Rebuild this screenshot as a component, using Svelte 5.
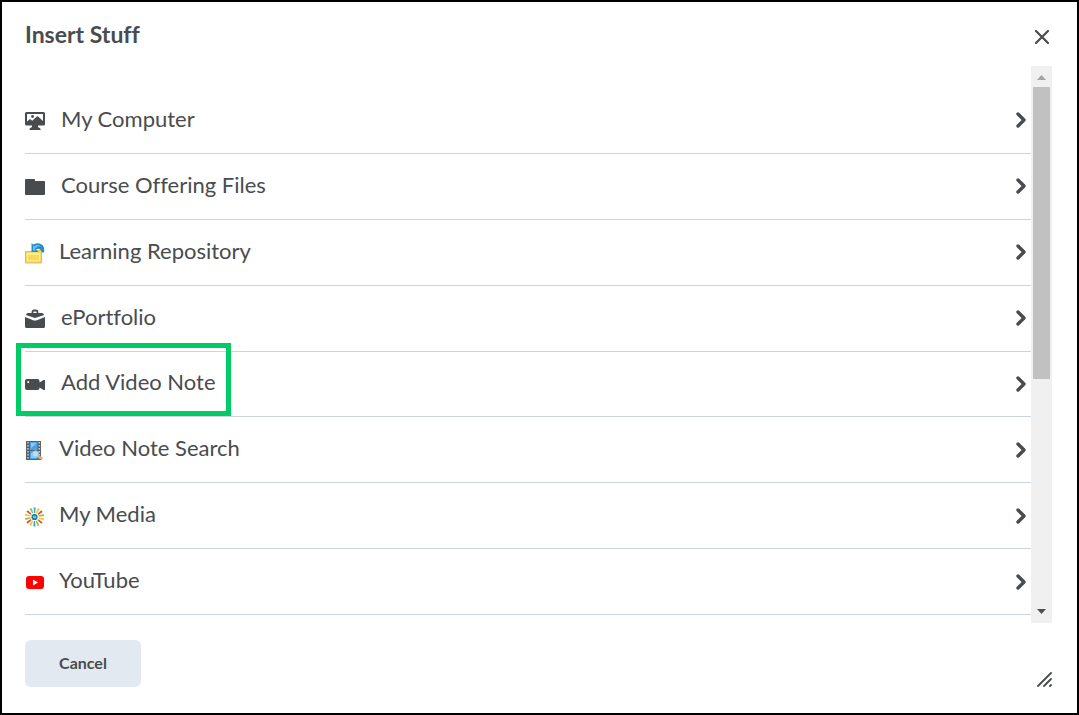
<script>
  const items = [
    { name: 'My Computer', icon: 'computer' },
    { name: 'Course Offering Files', icon: 'folder' },
    { name: 'Learning Repository', icon: 'repository', small: true },
    { name: 'ePortfolio', icon: 'portfolio' },
    { name: 'Add Video Note', icon: 'video', marked: true },
    { name: 'Video Note Search', icon: 'film', small: true },
    { name: 'My Media', icon: 'media', small: true },
    { name: 'YouTube', icon: 'youtube', small: true }
  ];
  const rayColors = ['#3aa6dd', '#f9c623', '#e8473f', '#8cc63f', '#f9c623', '#e8473f', '#8cc63f'];
  const rays = Array.from({ length: 14 }, (_, i) => ({ angle: (i * 360) / 14, color: rayColors[i % 7] }));
</script>

<div class="dialog" role="dialog" aria-labelledby="dialog-title">
  <header>
    <h1 id="dialog-title">Insert Stuff</h1>
    <button class="close" type="button" aria-label="Close">
      <svg width="14" height="14" viewBox="0 0 14 14"><path d="M1 1 L13 13 M13 1 L1 13" fill="none" stroke="#494c4e" stroke-width="2.200" stroke-linecap="round" /></svg>
    </button>
  </header>

  <div class="body">
    <ul>
      {#each items as item}
        <li class:marked={item.marked}>
          <button class="row" type="button">
            <span class="icon" class:small={item.small}>
              {#if item.icon === 'computer'}
                <svg width="20" height="20" viewBox="0 0 20 20">
                  <path fill="#494c4e" fill-rule="evenodd" d="M1.500 1h17A1.500 1.500 0 0 1 20 2.500v10.500a1.500 1.500 0 0 1-1.500 1.500H13v1.500l2 1.200q.8.500.5 1.800H4.500q-.3-1.300.5-1.800L7 16v-1.500H1.500A1.500 1.500 0 0 1 0 13v-10.500A1.500 1.500 0 0 1 1.500 1zM2 3v7.500l3-2.500 2.200 1.800L12.500 5 18 10V3z" />
                  <circle cx="7.500" cy="5.500" r="1.400" fill="#494c4e" />
                </svg>
              {:else if item.icon === 'folder'}
                <svg width="20" height="20" viewBox="0 0 20 20"><path fill="#494c4e" d="M1 2h8q1 0 1 1v1h9q1 0 1 1v12q0 1-1 1H1q-1 0-1-1V3q0-1 1-1z" /></svg>
              {:else if item.icon === 'repository'}
                <svg width="20" height="22" viewBox="0 0 20 22">
                  <path fill="#f7dc62" stroke="#e3bd45" d="M.5 9.500h6l1-1h9v12.500H.5z" />
                  <path fill="#ffeb98" d="M2 11h13v8H2z" />
                  <path fill="#fcd955" d="M3 13h11v5H3z" />
                  <path fill="#258bc9" d="M6.500 1v9h7L11 7.500Q15 5 17 10.500h2Q20.500 2 13 1.200 9.500 1 8.500 2.800z" />
                  <path fill="#6bc1ed" d="M8 4v4.500h3L9.800 7Q13 3 16.500 5 13 1.500 9 4.500z" />
                </svg>
              {:else if item.icon === 'portfolio'}
                <svg width="20" height="20" viewBox="0 0 20 20">
                  <path fill="none" stroke="#494c4e" stroke-width="1.800" d="M7.500 5V3q0-1.500 1.500-1.500h2q1.500 0 1.500 1.500v2" />
                  <path fill="#494c4e" d="M3 4h14q1 0 1.400 1l.8 1L10 9 .8 6 1.600 5Q2 4 3 4zM0 8l7.500 3q2.500 1 5 0L20 8v9.500q0 1.500-1.500 1.500h-17Q0 19 0 17.500z" />
                </svg>
              {:else if item.icon === 'video'}
                <svg width="20" height="20" viewBox="0 0 20 20">
                  <path fill="#494c4e" fill-rule="evenodd" d="M2 4h10.500q2 0 2 2v1.500L18.500 5H20v10h-1.500l-4-2.500V13q0 2-2 2H2q-2 0-2-2V6q0-2 2-2zM2.300 6.200v1.800h1.800V6.200z" />
                </svg>
              {:else if item.icon === 'film'}
                <svg width="18" height="20" viewBox="0 0 18 20">
                  <path fill="#5d6066" d="M1 0h15v19H1z" />
                  <path fill="#4aa3e8" d="M5 1h7.500v8H5zM5 10h7.500v8H5z" />
                  <path fill="#8acbf4" d="M6 2h6L6 7zM6 12h6v5H6z" />
                  <path stroke="#c9cccf" stroke-width="1.500" stroke-dasharray="1.500 1.500" d="M3 1v18M14.300 1v18" />
                  <path stroke="#d9b370" stroke-width="2.500" stroke-linecap="round" d="M13.500 15.500l3 2" />
                  <circle cx="10.500" cy="13" r="3.200" fill="#b5e0fb" stroke="#8bc3e8" />
                </svg>
              {:else if item.icon === 'media'}
                <svg width="20" height="20" viewBox="0 0 20 20">
                  {#each rays as ray}
                    <path d="M8.500 .5h2.200l-.5 5.500h-1.200z" fill={ray.color} transform="rotate({ray.angle} 9.500 10)" />
                  {/each}
                  <circle cx="9.500" cy="10" r="3.800" fill="#fff" />
                  <circle cx="9.500" cy="10" r="2.200" fill="#fff" stroke="#167b9d" stroke-width="1.800" />
                  <circle cx="9.500" cy="10" r=".8" fill="#1b86aa" />
                </svg>
              {:else}
                <svg width="20" height="20" viewBox="0 0 20 20">
                  <rect x="1" y="3" width="18" height="13" rx="3" fill="#f00" />
                  <path fill="#fff" d="M8 6.500v6l5-3z" />
                </svg>
              {/if}
            </span>
            <span class="name">{item.name}</span>
            <svg class="chevron" width="10" height="16" viewBox="0 0 10 16"><path d="M2 2 L8 8 L2 14" fill="none" stroke="#494c4e" stroke-width="3.400" stroke-linecap="round" stroke-linejoin="round" /></svg>
          </button>
        </li>
      {/each}
    </ul>
    <div class="scrollbar" aria-hidden="true">
      <span class="arrow"><svg width="9" height="5" viewBox="0 0 9 5"><path fill="#a3a3a3" d="M4.500 0L9 5H0z" /></svg></span>
      <span class="track"><span class="thumb"></span></span>
      <span class="arrow lower"><svg width="9" height="5" viewBox="0 0 9 5"><path fill="#505050" d="M0 0h9L4.500 5z" /></svg></span>
    </div>
  </div>

  <footer>
    <button class="cancel" type="button">Cancel</button>
    <svg class="grip" width="16" height="16" viewBox="0 0 16 16"><path d="M2 15L15 2M8 15l7-7M14 15l1-1" fill="none" stroke="#494c4e" stroke-width="1.800" stroke-linecap="round" /></svg>
  </footer>
</div>

<style>
  :global(body) {
    margin: 0;
    background: #fff;
  }
  .dialog {
    box-sizing: border-box;
    min-height: 100vh;
    display: flex;
    flex-direction: column;
    border: 2px solid #000;
    padding: 0 25px 0 23px;
    background: #fff;
    color: #494c4e;
    font-family: Lato, "Liberation Sans", sans-serif;
    font-variant-ligatures: none;
  }
  button {
    margin: 0;
    padding: 0;
    border: 0;
    background: none;
    color: inherit;
    font: inherit;
    cursor: pointer;
  }
  svg {
    display: block;
    flex: none;
  }
  header {
    display: flex;
    justify-content: space-between;
    align-items: flex-start;
    height: 64px;
  }
  h1 {
    margin: 17px 0 0;
    font-size: 23px;
    line-height: 30px;
    font-weight: 700;
  }
  .close {
    margin-top: 25px;
    padding: 3px;
  }
  .body {
    flex: 1;
    display: flex;
  }
  ul {
    flex: 1;
    display: flex;
    flex-direction: column;
    margin: 0;
    padding: 22px 0 8px;
    list-style: none;
  }
  li {
    flex: 1;
    display: flex;
    position: relative;
    border-bottom: 1px solid #cdd5dc;
  }
  .marked::after {
    content: "";
    position: absolute;
    box-sizing: border-box;
    top: -9px;
    bottom: 0;
    left: -9px;
    width: 215px;
    border: 5px solid #00cc66;
    pointer-events: none;
  }
  .row {
    flex: 1;
    display: flex;
    align-items: center;
    padding-right: 5px;
    text-align: left;
  }
  .icon {
    width: 20px;
    margin-right: 16px;
    padding-top: 2px;
  }
  .icon.small {
    width: 18px;
  }
  .name {
    flex: 1;
    padding-bottom: 3px;
    font-size: 22px;
    line-height: 30px;
  }
  .scrollbar {
    width: 21px;
    display: flex;
    flex-direction: column;
    background: #f0f0f0;
  }
  .arrow {
    height: 21px;
    display: grid;
    place-items: center;
    box-sizing: border-box;
    padding-top: 2px;
  }
  .arrow.lower {
    padding: 0 0 2px;
  }
  .track {
    flex: 1;
    display: flex;
    flex-direction: column;
    padding: 0 2px;
  }
  .thumb {
    height: 56.7%;
    background: #c1c1c1;
  }
  footer {
    display: flex;
    justify-content: space-between;
    align-items: flex-end;
    padding: 17px 0 26px;
  }
  .cancel {
    min-width: 116px;
    height: 47px;
    padding-bottom: 2px;
    border-radius: 6px;
    background: #e3e9f1;
    font-size: 16px;
    font-weight: 700;
  }
</style>
